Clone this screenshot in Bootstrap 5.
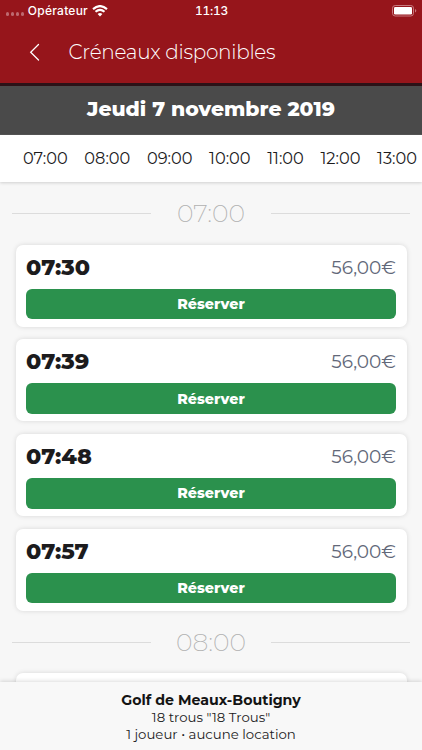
<!DOCTYPE html>
<html lang="fr">
<head>
<meta charset="utf-8">
<meta name="viewport" content="width=device-width, initial-scale=1">
<title>Créneaux disponibles</title>
<link href="https://cdn.jsdelivr.net/npm/bootstrap@5.3.0/dist/css/bootstrap.min.css" rel="stylesheet">
<style>
body{font-family:Montserrat,Inter,"Open Sans",sans-serif;background:#f7f7f7;color:#1c1b1d;height:750px}
.screen{height:750px}
.app-header{background:#96151b;height:86px;border-bottom:3px solid #2b1217;color:#fff}
.status{height:21px;font-family:Inter,Roboto,sans-serif;font-size:12px;line-height:21px;font-weight:500;padding-left:6px;padding-right:5px}
.signal{gap:1.7px;margin-right:4px;padding-top:7px}
.signal i{width:3.2px;height:3.2px;border-radius:50%;background:#bd6a70}
.operator{letter-spacing:.25px}
.clock{font-variant-numeric:tabular-nums;letter-spacing:-.3px}
.title-row{height:62px;padding-left:28px}
.title-row h1{font-size:20px;font-weight:350;letter-spacing:-.28px;margin-left:26.5px;line-height:24px}
.day{height:49px;background:#4a4a4a;border-bottom:1px solid #565656;color:#fff;font-size:20.4px;font-weight:800;line-height:46px}
.hours{height:47px;background:#fff;box-shadow:0 1px 3px rgba(0,0,0,.16);font-size:16.2px;font-weight:400;line-height:47px;padding-left:23px;gap:16.7px}
.slots{padding:0 12px}
.hour-sep{height:62.5px;font-size:25.2px;font-weight:200;color:#b0b0b0;line-height:62px}
.hour-sep .rule{height:1px;background:#dcdcdc;width:139px}
.slot{height:82px;margin:0 3.5px 12.8px;border-radius:7px;background:#fff;box-shadow:0 0 5px rgba(0,0,0,.13);padding:8px 10.5px}
.slot-info{height:28px;margin-bottom:8px}
.time{font-size:22.3px;font-weight:800;line-height:28px}
.price{font-size:18.5px;font-weight:400;line-height:29px;color:#626879}
.reserve,.reserve:hover{height:30.5px;border-radius:6px;background:#2b914d;color:#fff;font-size:14.3px;font-weight:800;line-height:30px}
.summary{height:68px;background:#f8f8f8;box-shadow:0 -1px 4px rgba(0,0,0,.14);font-size:13.3px;font-weight:400;line-height:16.5px;padding-top:9px}
.summary strong{font-size:14.2px;font-weight:700;line-height:18px;color:#141414}
</style>
</head>
<body>
<div class="screen d-flex flex-column overflow-hidden position-relative">
  <header class="app-header flex-shrink-0">
    <div class="status row g-0">
      <div class="col-5 d-flex align-items-center">
        <span class="signal d-flex"><i></i><i></i><i></i><i></i></span>
        <span class="operator">Opérateur</span>
        <svg class="ms-1" width="16" height="12" viewBox="0 0 16 12" fill="none" stroke="#fff" stroke-width="2.1"><path d="M1 4.1Q8-2 15 4.1M3.5 6.8Q8 3 12.500 6.800"/><path d="M8 11.500L5.600 9Q8 7 10.400 9Z" fill="#fff" stroke="none"/></svg>
      </div>
      <div class="col-2 text-center clock">11:13</div>
      <div class="col-5 d-flex align-items-center justify-content-end">
        <svg width="25" height="12" viewBox="0 0 25 12"><rect x=".5" y=".5" width="21" height="10.500" rx="2.700" fill="none" stroke="#c8797e"/><rect x="2" y="2" width="18" height="7.500" rx="1.300" fill="#fff"/><path d="M23 4v3.500q1.300-.5 1.300-1.750T23 4" fill="#c8797e"/></svg>
      </div>
    </div>
    <div class="title-row d-flex align-items-center">
      <svg width="14" height="20" viewBox="0 0 14 20" fill="none" stroke="#fff" stroke-width="1.300" stroke-linecap="round"><path d="M10.500 2.500L2.700 10.300L10.500 18"/></svg>
      <h1 class="mb-0">Créneaux disponibles</h1>
    </div>
  </header>
  <div class="day text-center flex-shrink-0"><span class="day-text">Jeudi 7 novembre 2019</span></div>
  <nav class="hours d-flex flex-shrink-0 text-nowrap">
    <span>07:00</span><span>08:00</span><span>09:00</span><span>10:00</span><span>11:00</span><span>12:00</span><span>13:00</span>
  </nav>
  <main class="slots flex-grow-1 overflow-hidden">
    <div class="hour-sep d-flex align-items-center justify-content-between"><span class="rule"></span><span>07:00</span><span class="rule"></span></div>
    <section class="slot"><div class="slot-info d-flex justify-content-between"><span class="time">07:30</span><span class="price">56,00€</span></div><button class="btn reserve w-100 p-0 border-0 d-block">Réserver</button></section>
    <section class="slot"><div class="slot-info d-flex justify-content-between"><span class="time">07:39</span><span class="price">56,00€</span></div><button class="btn reserve w-100 p-0 border-0 d-block">Réserver</button></section>
    <section class="slot"><div class="slot-info d-flex justify-content-between"><span class="time">07:48</span><span class="price">56,00€</span></div><button class="btn reserve w-100 p-0 border-0 d-block">Réserver</button></section>
    <section class="slot mb-0"><div class="slot-info d-flex justify-content-between"><span class="time">07:57</span><span class="price">56,00€</span></div><button class="btn reserve w-100 p-0 border-0 d-block">Réserver</button></section>
    <div class="hour-sep d-flex align-items-center justify-content-between"><span class="rule"></span><span>08:00</span><span class="rule"></span></div>
    <section class="slot"></section>
  </main>
  <footer class="summary text-center flex-shrink-0 position-relative">
    <strong class="d-block">Golf de Meaux-Boutigny</strong>
    <div>18 trous "18 Trous"</div>
    <div class="people">1 joueur • aucune location</div>
  </footer>
</div>
<script src="https://cdn.jsdelivr.net/npm/bootstrap@5.3.0/dist/js/bootstrap.bundle.min.js"></script>
</body>
</html>
